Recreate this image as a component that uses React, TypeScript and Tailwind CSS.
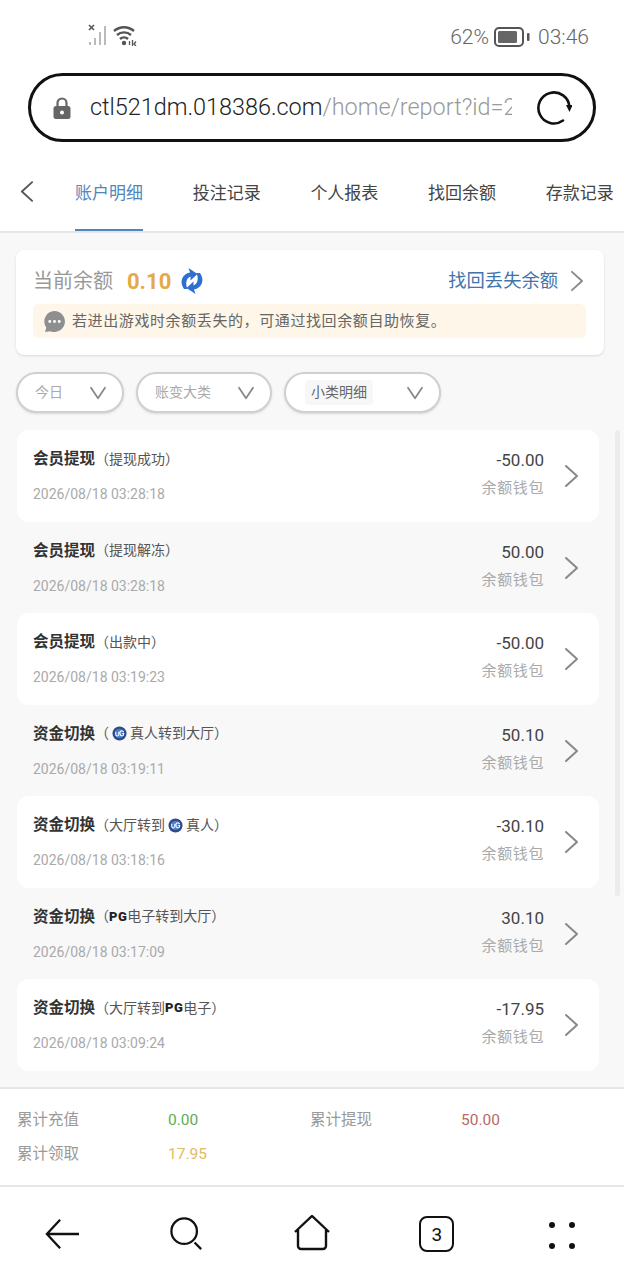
import type { ReactNode } from "react";

const UgLogo = () => (
  <svg viewBox="0 0 16 16" className="w-[15px] h-[15px] mx-[3px] shrink-0">
    <circle cx="8" cy="8" r="7.5" fill="#2f4a8a" />
    <circle cx="8" cy="8" r="5" fill="#4a7fc4" />
    <path d="M4 6v3a1.6 1.6 0 0 0 3.2 0V6M12.4 6.4A2 2 0 0 0 8.6 8a2 2 0 0 0 3.8 1.2V8H11" fill="none" stroke="#fff" strokeWidth="1.1" />
  </svg>
);

const Pg = () => <span className="font-black text-[13px] text-[#222] tracking-[0.5px]">PG</span>;

// thin chevron used across the page, sized by the caller
function Chevron({ dir, className }: { dir: "left" | "right" | "down"; className: string }) {
  const d = dir === "right" ? "M2 2l11 10L2 22" : dir === "left" ? "M13 2L2 12l11 10" : "M2 2l8 12L18 2";
  const box = dir === "down" ? "0 0 20 16" : "0 0 15 24";
  return (
    <svg viewBox={box} className={className}>
      <path d={d} fill="none" stroke="currentColor" strokeWidth="2" strokeLinecap="round" strokeLinejoin="round" />
    </svg>
  );
}

const rows: { title: string; sub: ReactNode; time: string; amount: string }[] = [
  { title: "会员提现", sub: "（提现成功）", time: "2026/08/18 03:28:18", amount: "-50.00" },
  { title: "会员提现", sub: "（提现解冻）", time: "2026/08/18 03:28:18", amount: "50.00" },
  { title: "会员提现", sub: "（出款中）", time: "2026/08/18 03:19:23", amount: "-50.00" },
  { title: "资金切换", sub: <>（<UgLogo />真人转到大厅）</>, time: "2026/08/18 03:19:11", amount: "50.10" },
  { title: "资金切换", sub: <>（大厅转到<UgLogo />真人）</>, time: "2026/08/18 03:18:16", amount: "-30.10" },
  { title: "资金切换", sub: <>（<Pg />电子转到大厅）</>, time: "2026/08/18 03:17:09", amount: "30.10" },
  { title: "资金切换", sub: <>（大厅转到<Pg />电子）</>, time: "2026/08/18 03:09:24", amount: "-17.95" },
];

const tabs = ["账户明细", "投注记录", "个人报表", "找回余额", "存款记录"];

function Filter({ label, width, active }: { label: string; width: string; active?: boolean }) {
  return (
    <div className={`${width} h-[41px] rounded-full border-2 border-[#d0d0d0] bg-white flex items-center justify-between pl-[17px] pr-[15px] shadow-sm`}>
      {active ? (
        <span className="text-[14px] text-[#666] bg-[#f7f7f7] px-[6px] py-[2px] rounded ml-[2px]">{label}</span>
      ) : (
        <span className="text-[14px] text-[#aaa]">{label}</span>
      )}
      <Chevron dir="down" className="w-[18px] h-[14px] text-[#888]" />
    </div>
  );
}

export default function App() {
  return (
    <div className="relative w-[624px] h-[1280px] overflow-hidden bg-white flex flex-col font-['Roboto','Noto_Sans_CJK_SC',sans-serif]">
      {/* Status bar */}
      <div className="h-[73px] shrink-0 flex items-start justify-between pl-[88px] pr-[35px] pt-[22px] text-[#666]">
        <div className="flex items-center gap-[5px] pt-[2px]">
          <svg viewBox="0 0 20 22" className="w-[20px] h-[22px]">
            <path d="M1 1l5 5M6 1L1 6" stroke="#555" strokeWidth="1.6" />
            <path d="M2 18v3M7 14v7M12 8v13M17 2v19" stroke="#bbb" strokeWidth="2" />
          </svg>
          <svg viewBox="0 0 25 22" className="w-[25px] h-[22px]">
            <path d="M1 7a15 15 0 0 1 20 0M4 11a10.5 10.5 0 0 1 14 0M7 15a6 6 0 0 1 8 0" fill="none" stroke="#555" strokeWidth="2.4" />
            <circle cx="11" cy="19" r="2.2" fill="#555" />
            <path d="M16.5 17v4M19.5 16v6M23 17.5l-2 2.5 2 2" fill="none" stroke="#555" strokeWidth="1.3" />
          </svg>
        </div>
        <div className="flex items-center h-[30px] text-[21px] leading-none">
          <span className="font-light">62%</span>
          <svg viewBox="0 0 36 20" className="w-[36px] h-[20px] ml-[5px]">
            <rect x="1" y="1" width="28" height="18" rx="4" fill="none" stroke="#555" strokeWidth="2" />
            <rect x="4" y="4" width="19" height="12" rx="1.5" fill="#666" />
            <rect x="33" y="6" width="2.5" height="8" rx="1" fill="#555" />
          </svg>
          <span className="font-light ml-[8px]">03:46</span>
        </div>
      </div>

      {/* URL bar */}
      <div className="shrink-0 mx-[28px] h-[69px] rounded-full border-[3px] border-[#111] flex items-center pl-[22px] pr-[21px]">
        <svg viewBox="0 0 18 22" className="w-[18px] h-[22px] shrink-0">
          <path d="M4.5 10V6a4.5 4.5 0 0 1 9 0v4" fill="none" stroke="#666" strokeWidth="2.2" />
          <rect x="0.5" y="9" width="17" height="13" rx="2.5" fill="#666" />
          <circle cx="9" cy="15.5" r="2" fill="#fff" />
        </svg>
        <div className="ml-[19px] w-[422px] overflow-hidden whitespace-nowrap text-[23.4px] leading-none text-[#222] font-light">
          ctl521dm.018386.com<span className="text-[#999]">/home/report?id=2</span>
        </div>
        <svg viewBox="0 0 36 36" className="w-[36px] h-[36px] ml-auto shrink-0">
          <path d="M27 30.5A15.5 15.5 0 1 1 33.4 17" fill="none" stroke="#111" strokeWidth="2.6" strokeLinecap="round" />
          <path d="M30 15l6.5 0-3 7z" fill="#111" />
        </svg>
      </div>

      {/* Tabs */}
      <div className="mt-[14px] h-[77px] shrink-0 flex border-b-2 border-[#e6e6e6] pl-[20px] overflow-hidden">
        <div className="w-[55px] flex items-center pb-[5px]">
          <Chevron dir="left" className="w-[14px] h-[23px] text-[#555]" />
        </div>
        <div className="flex gap-[49.7px]">
          {tabs.map((t, i) => (
            <div
              key={t}
              className={`w-[68px] whitespace-nowrap text-[17px] pt-[25px] ${
                i === 0 ? "text-[#4f86c0] border-b-2 border-[#4f86c0]" : "text-[#444]"
              }`}
            >
              {t}
            </div>
          ))}
        </div>
      </div>

      {/* Content */}
      <div className="flex-1 bg-[#f8f8f8] relative px-[17px] pt-[17px]">
        <div className="-mx-px w-[588px] h-[105px] bg-white rounded-lg shadow-sm pl-[17px] pr-[20px] pt-[15px]">
          <div className="flex items-center h-[32px]">
            <span className="text-[20px] text-[#999]">当前余额</span>
            <span className="ml-[14px] text-[22px] font-bold text-[#e3aa45]">0.10</span>
            <svg viewBox="0 0 26 26" className="w-[26px] h-[26px] ml-[8px]">
              <path d="M5 21C0 14 3 6 11 4.500L9.500 0l9 6-7 6.500 0-4C7.500 10 6 15 8.500 21z" fill="#2f6fd0" />
              <path d="M21 5c5 7 2 15-6 16.500L16.500 26l-9-6 7-6.500 0 4c4-1.500 5.500-6.500 3-12.500z" fill="#2f6fd0" />
            </svg>
            <span className="ml-auto text-[18.3px] text-[#3f74ad]">找回丢失余额</span>
            <Chevron dir="right" className="w-[14px] h-[22px] ml-[12px] text-[#888]" />
          </div>
          <div className="mt-[7px] -mr-[2px] h-[34px] rounded-md bg-[#fdf6e9] flex items-center pl-[11px]">
            <svg viewBox="0 0 20 20" className="w-[21px] h-[21px] shrink-0">
              <path d="M10 0a10 10 0 1 1-4 19.200L1 20l1.200-4.200A10 10 0 0 1 10 0z" fill="#8f8f8f" />
              <circle cx="5.500" cy="10" r="1.400" fill="#fff" />
              <circle cx="10" cy="10" r="1.400" fill="#fff" />
              <circle cx="14.500" cy="10" r="1.400" fill="#fff" />
            </svg>
            <span className="ml-[7px] text-[15px] tracking-[0.6px] text-[#666]">若进出游戏时余额丢失的，可通过找回余额自助恢复。</span>
          </div>
        </div>

        <div className="flex gap-[12px] mt-[17px] -ml-px">
          <Filter label="今日" width="w-[108px]" />
          <Filter label="账变大类" width="w-[136px]" />
          <Filter label="小类明细" width="w-[157px]" active />
        </div>

        <div className="mt-[17px] w-[582px]">
          {rows.map((r, i) => (
            <div
              key={i}
              className={`h-[91.5px] rounded-xl flex items-start pl-[16px] pr-[20px] ${i % 2 === 0 ? "bg-white" : ""}`}
            >
              <div className="flex-1 pt-[18px]">
                <div className="flex items-center h-[24px]">
                  <span className="text-[15.5px] font-bold text-[#333]">{r.title}</span>
                  <span className="flex items-center text-[14px] text-[#555] -mt-[2px]">{r.sub}</span>
                </div>
                <div className="mt-[12px] text-[14px] leading-[20px] text-[#aaa]">{r.time}</div>
              </div>
              <div className="pt-[18px] text-right mr-[20px]">
                <div className="text-[17px] leading-[24px] text-[#444]">{r.amount}</div>
                <div className="mt-[5px] text-[15px] tracking-[0.6px] leading-[22px] text-[#aaa]">余额钱包</div>
              </div>
              <Chevron dir="right" className="mt-[34px] w-[15px] h-[24px] text-[#888]" />
            </div>
          ))}
        </div>

        {/* scrollbar */}
        <div className="absolute right-[4px] top-[197px] w-[5px] h-[466px] bg-[#ececec] rounded-full" />
      </div>

      {/* Totals */}
      <div className="h-[100px] shrink-0 border-y-2 border-[#e6e6e6] grid grid-cols-[151px_142px_151px_1fr] content-start gap-y-[10px] pl-[17px] pt-[19px] text-[15.5px] leading-[24px]">
        <span className="text-[#999]">累计充值</span>
        <span className="text-[#5cae4e]">0.00</span>
        <span className="text-[#999]">累计提现</span>
        <span className="text-[#b8695f]">50.00</span>
        <span className="text-[#999]">累计领取</span>
        <span className="text-[#e0bb60]">17.95</span>
      </div>

      {/* Browser nav */}
      <div className="h-[93px] shrink-0 grid grid-cols-5 justify-items-center items-start pt-[30px] text-[#111]">
        <svg viewBox="0 0 38 36" className="w-[36px] h-[34px]">
          <path d="M37 18H3M17 3L3 18l14 15" fill="none" stroke="#111" strokeWidth="2.4" />
        </svg>
        <svg viewBox="0 0 36 36" className="w-[34px] h-[34px]">
          <circle cx="15" cy="15" r="13.500" fill="none" stroke="#111" strokeWidth="2.400" />
          <path d="M26 27l7 7" stroke="#111" strokeWidth="2.400" />
        </svg>
        <svg viewBox="0 0 36 36" className="w-[36px] h-[36px] -mt-[2px]">
          <path d="M1 17L18 1l17 16M4 15v16a3 3 0 0 0 3 3h22a3 3 0 0 0 3-3V15" fill="none" stroke="#111" strokeWidth="2.400" />
        </svg>
        <div className="w-[35px] h-[36px] -mt-[1px] rounded-[8px] border-[2.5px] border-[#111] flex items-center justify-center text-[19px] leading-none">3</div>
        <div className="grid grid-cols-2 gap-x-[14px] gap-y-[15px] pt-[5px]">
          <span className="w-[6px] h-[6px] rounded-full bg-[#111]" />
          <span className="w-[6px] h-[6px] rounded-full bg-[#111]" />
          <span className="w-[6px] h-[6px] rounded-full bg-[#111]" />
          <span className="w-[6px] h-[6px] rounded-full bg-[#111]" />
        </div>
      </div>
    </div>
  );
}
